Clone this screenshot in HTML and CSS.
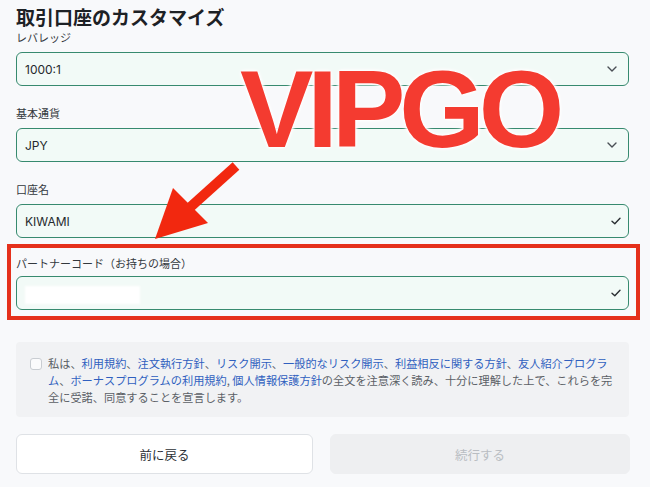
FILE: index.html
```html
<!DOCTYPE html>
<html lang="ja">
<head>
<meta charset="utf-8">
<link rel="stylesheet" href="styles.css">
</head>
<body>
<div class="page">
  <h1 class="title">取引口座のカスタマイズ</h1>

  <div class="field first">
    <div class="label">レバレッジ</div>
    <div class="input">
      <span class="value">1000:1</span>
      <svg class="icon" width="10" height="6" viewBox="0 0 10 6"><polyline points="1,1 5,5 9,1" fill="none" stroke="#4a4f55" stroke-width="1.4" stroke-linecap="round" stroke-linejoin="round"/></svg>
    </div>
  </div>

  <div class="field">
    <div class="label">基本通貨</div>
    <div class="input">
      <span class="value">JPY</span>
      <svg class="icon" width="10" height="6" viewBox="0 0 10 6"><polyline points="1,1 5,5 9,1" fill="none" stroke="#4a4f55" stroke-width="1.4" stroke-linecap="round" stroke-linejoin="round"/></svg>
    </div>
  </div>

  <div class="field">
    <div class="label">口座名</div>
    <div class="input">
      <span class="value">KIWAMI</span>
      <svg class="icon check" width="10" height="8" viewBox="0 0 10 8"><polyline points="1,4.2 3.8,6.8 9,1.2" fill="none" stroke="#2b2f33" stroke-width="1.4" stroke-linecap="round" stroke-linejoin="round"/></svg>
    </div>
  </div>

  <div class="field partner">
    <div class="label">パートナーコード（お持ちの場合）</div>
    <div class="input">
      <span class="redact"></span>
      <svg class="icon check" width="10" height="8" viewBox="0 0 10 8"><polyline points="1,4.2 3.8,6.8 9,1.2" fill="none" stroke="#2b2f33" stroke-width="1.4" stroke-linecap="round" stroke-linejoin="round"/></svg>
    </div>
  </div>

  <div class="agree">
    <span class="checkbox"></span>
    <p class="agree-text">私は、<a>利用規約</a>、<a>注文執行方針</a>、<a>リスク開示</a>、<a>一般的なリスク開示</a>、<a>利益相反に関する方針</a>、<a>友人紹介プログラ<br>ム</a>、<a>ボーナスプログラムの利用規約</a>, <a>個人情報保護方針</a>の全文を注意深く読み、十分に理解した上で、これらを完<br>全に受諾、同意することを宣言します。</p>
  </div>

  <div class="buttons">
    <button class="btn back">前に戻る</button>
    <button class="btn next">続行する</button>
  </div>
</div>

<div class="vipgo">VIPGO</div>
<svg class="arrow" width="650" height="487" viewBox="0 0 650 487">
  <line x1="236" y1="166" x2="186" y2="211" stroke="#f2280f" stroke-width="10" stroke-linecap="butt"/>
  <polygon points="155,239 173,188 208,223" fill="#f2280f"/>
</svg>
<div class="redbox"></div>
</body>
</html>
```

FILE: styles.css
```css
* { box-sizing: border-box; }
html, body {
  margin: 0;
  padding: 0;
  background: #f8f9fb;
}
body {
  width: 650px;
  height: 487px;
  overflow: hidden;
  position: relative;
  font-family: Inter, "Noto Sans CJK JP", sans-serif;
  color: #23272b;
}
.page {
  width: 613px;
  margin-left: 16px;
  padding-top: 4px;
}
.title {
  margin: 0;
  font-family: "Noto Sans CJK JP", sans-serif;
  font-size: 19px;
  font-weight: 700;
  line-height: 26px;
  color: #1d2125;
}
.field {
  margin-top: 20px;
}
.field.first { margin-top: 0; }
.field.partner { margin-top: 18px; }
.label {
  font-family: "Noto Sans CJK JP", sans-serif;
  font-size: 11px;
  line-height: 14px;
  color: #33383d;
  margin-bottom: 8px;
}
.field.partner .label { margin-bottom: 6px; }
.input {
  height: 34px;
  border: 1px solid #378a6f;
  border-radius: 6px;
  background: #f2faf7;
  display: flex;
  align-items: center;
  justify-content: space-between;
  padding: 0 11px 0 8px;
}
.value {
  font-size: 12px;
  color: #25292d;
}
.icon { display: block; }
.icon.check { margin-right: -4px; }
.redact {
  width: 115px;
  height: 18px;
  background: #ffffff;
  filter: blur(1px);
  margin-top: 3px;
}
.agree {
  margin-top: 32px;
  background: #f1f2f4;
  border-radius: 4px;
  height: 75px;
  padding: 13px 18px 0 14px;
  display: flex;
  gap: 6px;
}
.checkbox {
  flex: none;
  width: 12px;
  height: 12px;
  margin-top: 3px;
  border: 1px solid #c9cdd2;
  border-radius: 3px;
  background: #fbfbfc;
}
.agree-text {
  margin: 0;
  font-family: "Noto Sans CJK JP", sans-serif;
  font-size: 11.2px;
  line-height: 17px;
  color: #5b6066;
  white-space: nowrap;
}
.agree-text a {
  color: #2f5fbf;
}
.buttons {
  margin-top: 17px;
  display: grid;
  grid-template-columns: 297px 300px;
  gap: 17px;
}
.btn {
  height: 40px;
  border-radius: 6px;
  font-family: "Noto Sans CJK JP", sans-serif;
  font-size: 12.5px;
}
.btn.back {
  background: #ffffff;
  border: 1px solid #dfe2e6;
  color: #2c3035;
}
.btn.next {
  background: #eeeff1;
  border: 1px solid #eeeff1;
  color: #b9bdc2;
}
.vipgo {
  position: absolute;
  left: 240px;
  top: 54px;
  font-family: "Liberation Sans", Arial, sans-serif;
  font-weight: 700;
  font-size: 110px;
  line-height: 1;
  letter-spacing: -6px;
  color: #f43b30;
  text-shadow: 0 0 3px #fff, 0 0 3px #fff, 0 0 4px #fff, 0 0 5px #fff;
}
.arrow {
  position: absolute;
  left: 0;
  top: 0;
  pointer-events: none;
}
.redbox {
  position: absolute;
  left: 7px;
  top: 244px;
  width: 633px;
  height: 76px;
  border: 4px solid #e5301b;
  pointer-events: none;
}
```
